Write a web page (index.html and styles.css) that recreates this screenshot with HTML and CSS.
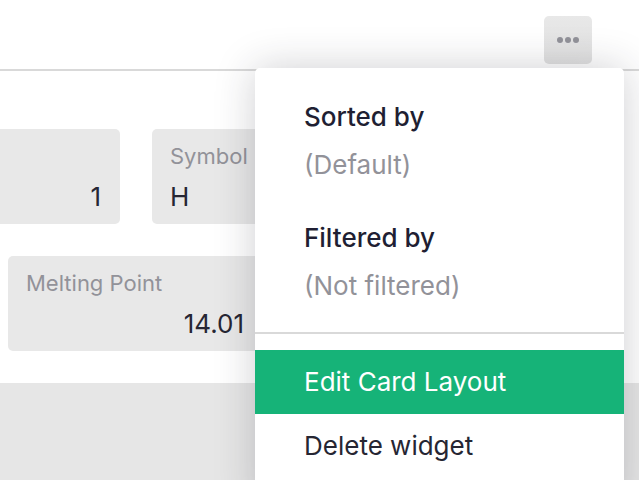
FILE: index.html
```html
<!DOCTYPE html>
<html>
<head>
<meta charset="utf-8">
<link rel="stylesheet" href="styles.css">
</head>
<body>
<div class="page">
  <header class="header">
    <button class="more-btn" aria-label="Widget options">
      <svg width="22" height="6" viewBox="0 0 22 6"><circle cx="3" cy="3" r="3"/><circle cx="11" cy="3" r="3"/><circle cx="19" cy="3" r="3"/></svg>
    </button>
  </header>
  <main class="cards">
    <div class="card-row row-1">
      <div class="card card-num">
        <div class="label">&nbsp;</div>
        <div class="value right">1</div>
      </div>
      <div class="card card-sym">
        <div class="label">Symbol</div>
        <div class="value">H</div>
      </div>
    </div>
    <div class="card-row row-2">
      <div class="card card-melt">
        <div class="label">Melting Point</div>
        <div class="value right">14.01</div>
      </div>
    </div>
  </main>
  <div class="next-section"></div>

  <div class="menu">
    <div class="menu-info">
      <div class="menu-title">Sorted by</div>
      <div class="menu-sub">(Default)</div>
    </div>
    <div class="menu-info second">
      <div class="menu-title">Filtered by</div>
      <div class="menu-sub">(Not filtered)</div>
    </div>
    <div class="menu-sep"></div>
    <div class="menu-item active">Edit Card Layout</div>
    <div class="menu-item">Delete widget</div>
  </div>
</div>
</body>
</html>
```
FILE: styles.css
```css
html, body {
  margin: 0;
  padding: 0;
  background: #ffffff;
}
body {
  font-family: Inter, "Noto Sans", "Liberation Sans", sans-serif;
  color: #262633;
  overflow: hidden;
}
.page {
  position: relative;
  width: 639px;
  height: 480px;
  overflow: hidden;
}
.header {
  height: 71px;
  border-bottom: 2px solid #d9d9d9;
  display: flex;
  justify-content: flex-end;
  align-items: flex-start;
  padding-top: 16px;
  padding-right: 47px;
  box-sizing: border-box;
}
.more-btn {
  width: 48px;
  height: 48px;
  border: none;
  border-radius: 5px;
  background: linear-gradient(#e8e8e8, #e1e1e1);
  display: flex;
  align-items: center;
  justify-content: center;
  padding: 0;
}
.more-btn svg {
  fill: #929299;
}
.cards {
  padding-top: 58px;
  display: flex;
  flex-direction: column;
  gap: 32px;
}
.card-row {
  display: flex;
  gap: 32px;
}
.row-1 {
  margin-left: -120px;
}
.row-2 {
  margin-left: 8px;
}
.card {
  background: #e8e8e8;
  border-radius: 5px;
  height: 95px;
  box-sizing: border-box;
  padding: 14px 19px 9px 18px;
  flex: none;
}
.card-num { width: 240px; }
.card-sym { width: 200px; }
.card-melt { width: 255px; }
.label {
  font-size: 22px;
  line-height: 26px;
  color: #929299;
  white-space: nowrap;
}
.value {
  font-size: 26px;
  line-height: 36px;
  margin-top: 10px;
  color: #262633;
}
.value.right { text-align: right; }
.next-section {
  margin-top: 32px;
  height: 100px;
  background: #e6e6e6;
}
.menu {
  position: absolute;
  left: 255px;
  top: 68px;
  width: 369px;
  height: 440px;
  background: #ffffff;
  border-radius: 5px;
  box-shadow: 0 0 40px rgba(38, 38, 51, 0.22);
  padding-top: 25px;
  box-sizing: border-box;
}
.menu-info {
  padding-left: 49px;
}
.menu-info.second {
  margin-top: 25px;
}
.menu-title {
  font-size: 26px;
  line-height: 48px;
  font-weight: 500;
  color: #1f1f33;
}
.menu-sub {
  font-size: 26px;
  line-height: 48px;
  color: #929299;
}
.menu-sep {
  margin-top: 22px;
  height: 2px;
  background: #d9d9d9;
  margin-bottom: 16px;
}
.menu-item {
  height: 64px;
  line-height: 64px;
  padding-left: 49px;
  font-size: 26px;
  color: #262633;
}
.menu-item.active {
  background: #16b378;
  color: #ffffff;
}
```
